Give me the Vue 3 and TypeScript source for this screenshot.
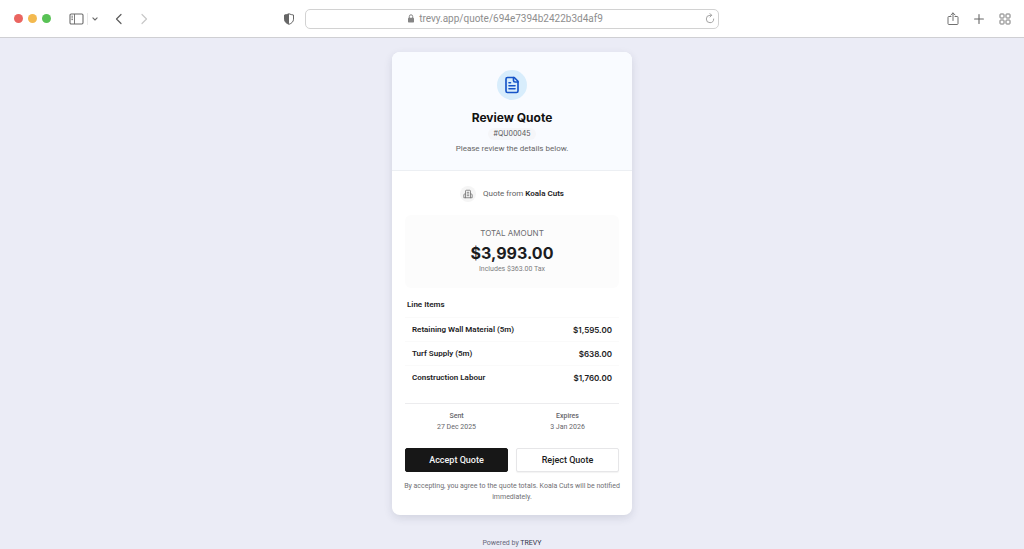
<script setup lang="ts">
interface LineItem {
  name: string
  price: string
}

const items: LineItem[] = [
  { name: 'Retaining Wall Material (5m)', price: '$1,595.00' },
  { name: 'Turf Supply (5m)', price: '$638.00' },
  { name: 'Construction Labour', price: '$1,760.00' },
]

const dates = [
  { label: 'Sent', value: '27 Dec 2025' },
  { label: 'Expires', value: '3 Jan 2026' },
]
</script>

<template>
  <div class="window">
    <header class="toolbar">
      <div class="side left">
        <div class="lights">
          <span class="light red"></span>
          <span class="light amber"></span>
          <span class="light green"></span>
        </div>
        <button class="tool sidebar" aria-label="Show sidebar">
          <svg width="15" height="12" viewBox="0 0 15 12" fill="none" stroke="#6b6b6b">
            <rect x="1" y="1" width="13" height="10" rx="1.2" stroke-width="1.1" />
            <path d="M5.500 1v10M2.400 3.200h1.600M2.400 4.900h1.600M2.400 6.600h1.600" stroke-width="0.9" />
          </svg>
        </button>
        <span class="rule"></span>
        <button class="tool chevron" aria-label="Sidebar options">
          <svg width="6" height="4" viewBox="0 0 6 4" fill="none" stroke="#6b6b6b" stroke-width="1.1" stroke-linecap="round" stroke-linejoin="round"><path d="M0.900 0.900 3 3 5.100 0.900" /></svg>
        </button>
        <button class="tool back" aria-label="Back">
          <svg width="8" height="12" viewBox="0 0 8 12" fill="none" stroke="#5c5c5c" stroke-width="1.200" stroke-linecap="round" stroke-linejoin="round"><path d="M6 1.500 1.500 6 6 10.500" /></svg>
        </button>
        <button class="tool forward" aria-label="Forward">
          <svg width="8" height="12" viewBox="0 0 8 12" fill="none" stroke="#c8c8c8" stroke-width="1.200" stroke-linecap="round" stroke-linejoin="round"><path d="M2 1.500 6.500 6 2 10.500" /></svg>
        </button>
        <button class="tool shield" aria-label="Privacy report">
          <svg width="12" height="12" viewBox="0 0 12 12">
            <path d="M6 0.800C7.500 1.500 9 1.800 10.500 2v4.200C10.500 8.700 8.600 10.400 6 11.300 3.400 10.400 1.500 8.700 1.500 6.200V2C3 1.800 4.500 1.500 6 0.800z" fill="#fff" stroke="#666" stroke-width="1" stroke-linejoin="round" />
            <path d="M6 0.800v10.500C3.400 10.400 1.500 8.700 1.500 6.200V2C3 1.800 4.500 1.500 6 0.800z" fill="#666" />
          </svg>
        </button>
      </div>
      <div class="address">
        <div class="url">
          <svg width="8" height="9" viewBox="0 0 8 9" fill="none"><rect x="1" y="3.800" width="6" height="4.700" rx="0.700" fill="#858585" /><path d="M2.300 4V2.500a1.700 1.700 0 0 1 3.400 0V4" stroke="#858585" /></svg>
          <span>trevy.app/quote/694e7394b2422b3d4af9</span>
        </div>
        <button class="tool" aria-label="Reload">
          <svg width="10" height="11" viewBox="0 0 10 11" fill="none" stroke="#999" stroke-width="0.900" stroke-linecap="round" stroke-linejoin="round"><path d="M8.700 6A3.700 3.700 0 1 1 5 2.300h1.500M5 0.600l1.700 1.700L5 4" /></svg>
        </button>
      </div>
      <div class="side right">
        <button class="tool" aria-label="Share">
          <svg width="12" height="14" viewBox="0 0 12 14" fill="none" stroke="#707070" stroke-width="1" stroke-linecap="round" stroke-linejoin="round"><path d="M4 4.500H1.800a.8.8 0 0 0-.8.8v6.400c0 .5.300.8.8.8h8.400c.5 0 .8-.3.800-.8V5.300a.8.8 0 0 0-.8-.8H8M6 8.500V1M3.900 3 6 .9 8.100 3" /></svg>
        </button>
        <button class="tool" aria-label="New tab">
          <svg width="10" height="10" viewBox="0 0 10 10" stroke="#666" stroke-width="1.100" stroke-linecap="round"><path d="M5 0.600v8.800M0.600 5h8.800" /></svg>
        </button>
        <button class="tool" aria-label="Tab overview">
          <svg width="12" height="12" viewBox="0 0 12 12" fill="none" stroke="#777" stroke-width="1"><rect x="1" y="1" width="4" height="4" rx="0.600" /><rect x="7" y="1" width="4" height="4" rx="0.600" /><rect x="1" y="7" width="4" height="4" rx="0.600" /><rect x="7" y="7" width="4" height="4" rx="0.600" /></svg>
        </button>
      </div>
    </header>

    <main class="page">
      <article class="card">
        <header class="intro">
          <span class="badge">
            <svg width="18" height="18" viewBox="0 0 24 24" fill="none" stroke="#1654c8" stroke-width="2.200" stroke-linecap="round" stroke-linejoin="round"><path d="M15 2H6a2 2 0 0 0-2 2v16a2 2 0 0 0 2 2h12a2 2 0 0 0 2-2V7z" /><path d="M14 2v4a2 2 0 0 0 2 2h4M10 9H8M16 13H8M16 17H8" /></svg>
          </span>
          <h1>Review Quote</h1>
          <span class="number">#QU00045</span>
          <p class="lead">Please review the details below.</p>
        </header>

        <div class="body">
          <div class="from">
            <span class="firm">
              <svg width="10" height="10" viewBox="0 0 24 24" fill="none" stroke="#777" stroke-width="2" stroke-linecap="round" stroke-linejoin="round"><path d="M6 21V5a2 2 0 0 1 2-2h8a2 2 0 0 1 2 2v16M6 12H4a2 2 0 0 0-2 2v7h20v-7a2 2 0 0 0-2-2h-2M10 8h4M10 12h4M10 16h4" /></svg>
            </span>
            <span>Quote from <strong>Koala Cuts</strong></span>
          </div>

          <section class="total">
            <span class="total-label">TOTAL AMOUNT</span>
            <strong class="amount">$3,993.00</strong>
            <span class="tax">Includes $363.00 Tax</span>
          </section>

          <h2>Line Items</h2>
          <table class="items">
            <tbody>
              <tr v-for="item in items" :key="item.name">
                <th scope="row">{{ item.name }}</th>
                <td>{{ item.price }}</td>
              </tr>
            </tbody>
          </table>

          <dl class="dates">
            <div v-for="d in dates" :key="d.label">
              <dt>{{ d.label }}</dt>
              <dd>{{ d.value }}</dd>
            </div>
          </dl>

          <div class="actions">
            <button class="action accept">Accept Quote</button>
            <button class="action reject">Reject Quote</button>
          </div>
          <p class="note">By accepting, you agree to the quote totals. Koala Cuts will be notified immediately.</p>
        </div>
      </article>
      <footer class="powered">Powered by <span>TREVY</span></footer>
    </main>
  </div>
</template>

<style>
body {
  margin: 0;
  background: #ebecf6;
}
</style>

<style scoped>
.window {
  display: flex;
  flex-direction: column;
  min-height: 100vh;
  font-family: Roboto, "Liberation Sans", sans-serif;
  color: #1c1c1e;
}
h1, h2, p, dl, dd {
  margin: 0;
}
button {
  font-family: inherit;
  cursor: pointer;
}
svg {
  display: block;
}
h1, .number, .total-label, .amount, .items td {
  font-family: Inter, "Liberation Sans", sans-serif;
}
.toolbar {
  display: grid;
  grid-template-columns: 1fr minmax(0, 414px) 1fr;
  align-items: center;
  height: 37px;
  background: #fff;
  border-bottom: 1px solid #cfcfd3;
}
.side {
  display: flex;
  align-items: center;
}
.left {
  padding: 0 10px 0 14px;
}
.right {
  justify-content: flex-end;
  gap: 15px;
  padding-right: 13px;
}
.tool {
  padding: 0;
  border: 0;
  background: none;
}
.lights {
  display: flex;
  gap: 5px;
}
.light {
  width: 9px;
  height: 9px;
  border-radius: 50%;
}
.red { background: #ea6560; }
.amber { background: #f3b94f; }
.green { background: #58c255; }
.sidebar { margin-left: 18px; }
.rule {
  width: 1px;
  height: 12px;
  margin-left: 3px;
  background: #e8e8e8;
}
.chevron { margin-left: 4px; }
.back { margin-left: 17px; }
.forward { margin-left: 17px; }
.shield { margin-left: auto; }
.address {
  display: flex;
  align-items: center;
  box-sizing: border-box;
  height: 20px;
  padding: 0 3px;
  border: 1px solid #d2d2d2;
  border-radius: 5px;
  background: #fff;
}
.url {
  display: flex;
  flex: 1;
  align-items: center;
  justify-content: center;
  gap: 4px;
  padding-right: 4px;
  font-size: 10px;
  line-height: 18px;
  color: #8e8e8e;
}
.page {
  display: flex;
  flex: 1;
  flex-direction: column;
  align-items: center;
  padding-top: 14px;
}
.card {
  width: 240px;
  overflow: hidden;
  border-radius: 8px;
  background: #fff;
  box-shadow: 0 3px 8px rgba(40, 44, 80, 0.13);
}
.intro {
  display: flex;
  flex-direction: column;
  align-items: center;
  padding: 18px 13px 14px;
  border-bottom: 1px solid #eceff3;
  background: #f9fbff;
}
.badge {
  display: grid;
  place-items: center;
  width: 30px;
  height: 30px;
  margin-bottom: 9px;
  border-radius: 50%;
  background: #d8edfc;
}
h1 {
  font-size: 12px;
  line-height: 18px;
  font-weight: 700;
  color: #111;
}
.number {
  margin-top: 1px;
  padding: 0 5px;
  border-radius: 6px;
  background: #f5f6f9;
  font-size: 7px;
  line-height: 12px;
  color: #555;
}
.lead {
  margin-top: 2px;
  font-size: 8px;
  line-height: 14px;
  color: #666;
}
.body {
  padding: 15px 13px 12px;
}
.from {
  display: flex;
  align-items: center;
  justify-content: center;
  gap: 7px;
  font-size: 8px;
  line-height: 16px;
  color: #5e5e62;
}
.from strong {
  font-weight: 600;
  color: #1c1c1e;
}
.firm {
  display: grid;
  place-items: center;
  width: 16px;
  height: 16px;
  border-radius: 50%;
  background: #f5f5f5;
}
.total {
  display: flex;
  flex-direction: column;
  align-items: center;
  margin-top: 13px;
  padding: 11px 0 14px;
  border-radius: 6px;
  background: #fcfcfc;
}
.total-label {
  font-size: 8px;
  line-height: 14px;
  color: #6c6c70;
}
.amount {
  margin-top: 2px;
  font-size: 16px;
  line-height: 22px;
  font-weight: 700;
}
.tax {
  font-size: 7px;
  line-height: 10px;
  color: #7d7d80;
}
h2 {
  margin: 11px 2px 6px;
  font-size: 8px;
  line-height: 12px;
  font-weight: 600;
}
.items {
  width: 100%;
  border-collapse: collapse;
  font-size: 8px;
  line-height: 12px;
}
.items th, .items td {
  height: 24px;
  box-sizing: border-box;
  padding: 0 7px;
  border-top: 1px solid #fafafa;
  text-align: left;
  font-weight: 600;
}
.items td {
  text-align: right;
}
.dates {
  display: grid;
  grid-template-columns: 1fr 1fr;
  gap: 8px;
  margin-top: 13px;
  padding-top: 7px;
  border-top: 1px solid #ececee;
  font-size: 7px;
  line-height: 11px;
  text-align: center;
  color: #66666a;
}
.dates dt {
  font-weight: 500;
}
.actions {
  display: grid;
  grid-template-columns: 1fr 1fr;
  gap: 8px;
  margin-top: 15px;
}
.action {
  height: 24px;
  padding: 0;
  border: 1px solid #e6e6e8;
  border-radius: 2px;
  background: #fff;
  font-size: 9px;
  font-weight: 500;
  color: #1c1c1e;
}
.accept {
  border-color: #171717;
  background: #171717;
  color: #f4f4f4;
}
.reject {
  box-shadow: 0 1px 1px rgba(0, 0, 0, 0.05);
}
.note {
  margin: 9px -4px 0;
  font-size: 7px;
  line-height: 11px;
  text-align: center;
  color: #707074;
}
.powered {
  margin-top: 22px;
  font-size: 7px;
  line-height: 12px;
  color: #66687a;
}
.powered span {
  color: #33354a;
}
</style>
